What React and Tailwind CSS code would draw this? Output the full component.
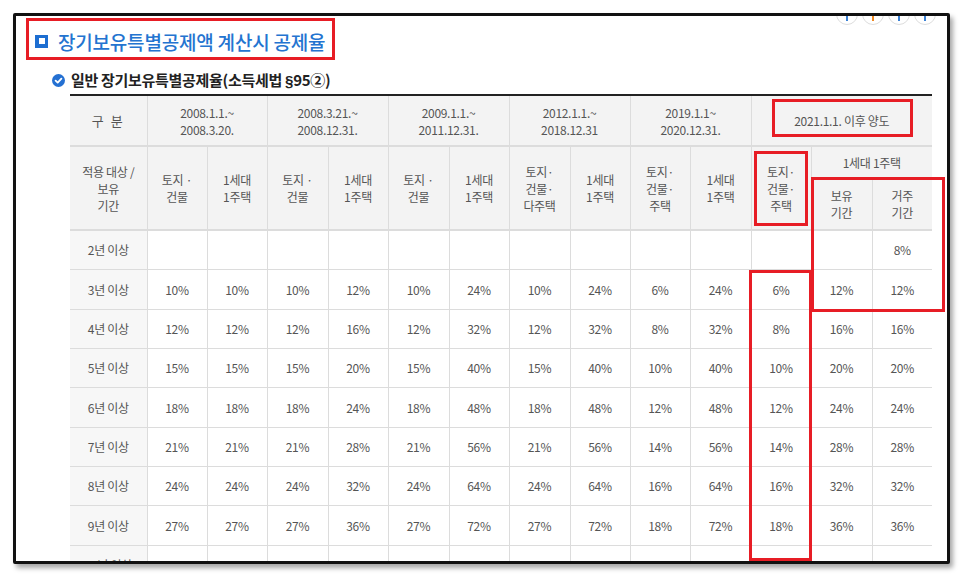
const groups = [
  { date: ['2008.1.1.~', '2008.3.20.'], span: 2 },
  { date: ['2008.3.21.~', '2008.12.31.'], span: 2 },
  { date: ['2009.1.1.~', '2011.12.31.'], span: 2 },
  { date: ['2012.1.1.~', '2018.12.31'], span: 2 },
  { date: ['2019.1.1~', '2020.12.31.'], span: 2 },
]

const subHeads = [
  ['토지 ·', '건물'],
  ['1세대', '1주택'],
  ['토지 ·', '건물'],
  ['1세대', '1주택'],
  ['토지 ·', '건물'],
  ['1세대', '1주택'],
  ['토지·', '건물·', '다주택'],
  ['1세대', '1주택'],
  ['토지·', '건물·', '주택'],
  ['1세대', '1주택'],
]

const colWidths = [77, 60, 60, 61, 60, 61, 60, 61, 60, 60, 61, 60, 61, 60]

const rows = [
  { label: '2년 이상', h: 39, v: ['', '', '', '', '', '', '', '', '', '', '', '', '8%'] },
  { label: '3년 이상', h: 40, v: ['10%', '10%', '10%', '12%', '10%', '24%', '10%', '24%', '6%', '24%', '6%', '12%', '12%'] },
  { label: '4년 이상', h: 39, v: ['12%', '12%', '12%', '16%', '12%', '32%', '12%', '32%', '8%', '32%', '8%', '16%', '16%'] },
  { label: '5년 이상', h: 39, v: ['15%', '15%', '15%', '20%', '15%', '40%', '15%', '40%', '10%', '40%', '10%', '20%', '20%'] },
  { label: '6년 이상', h: 40, v: ['18%', '18%', '18%', '24%', '18%', '48%', '18%', '48%', '12%', '48%', '12%', '24%', '24%'] },
  { label: '7년 이상', h: 39, v: ['21%', '21%', '21%', '28%', '21%', '56%', '21%', '56%', '14%', '56%', '14%', '28%', '28%'] },
  { label: '8년 이상', h: 39, v: ['24%', '24%', '24%', '32%', '24%', '64%', '24%', '64%', '16%', '64%', '16%', '32%', '32%'] },
  { label: '9년 이상', h: 40, v: ['27%', '27%', '27%', '36%', '27%', '72%', '27%', '72%', '18%', '72%', '18%', '36%', '36%'] },
  { label: '10년 이상', h: 39, v: ['30%', '30%', '30%', '40%', '30%', '80%', '30%', '80%', '20%', '80%', '20%', '40%', '40%'] },
]

function Lines({ lines }) {
  return lines.map((l, i) => (
    <span key={i} className="block">
      {l}
    </span>
  ))
}

export default function App() {
  return (
    <div
      className="w-[966px] h-[578px] bg-white overflow-hidden pt-[13px] pl-[13px]"
      style={{ fontFamily: '"Noto Sans CJK KR", "Noto Sans", sans-serif' }}
    >
      <div className="relative w-[937px] h-[551px] border-[3px] border-[#111] rounded-[2px] bg-white shadow-[3px_4px_5px_rgba(0,0,0,0.35)]">
        <div className="absolute inset-0 overflow-hidden">
          {/* font size controls, cut off at top */}
          <div className="absolute -top-[13px] left-[768px] flex items-end gap-[4px]">
            <span className="text-[12px] leading-[14px] text-[#666] mr-[4px] mb-[8px]">글자크기</span>
            {['#3b82d6', '#f08a24', '#3b82d6', '#3b82d6'].map((c, i) => (
              <span
                key={i}
                className="w-[22px] h-[22px] rounded-full border border-[#ddd] flex items-end justify-center pb-[3px]"
              >
                <span className="w-[2px] h-[6px]" style={{ backgroundColor: c }} />
              </span>
            ))}
          </div>

          {/* heading */}
          <div className="ml-[10px] mt-[2px] w-[309px] h-[42px] border-[3px] border-[#e71d25] flex items-center pl-[6px] pt-[4px] gap-[10px]">
            <span className="w-[13px] h-[13px] bg-[#1d6ed1] flex items-center justify-center">
              <span className="w-[6px] h-[6px] bg-white" />
            </span>
            <h1 className="text-[19px] leading-none font-medium text-[#2474d0] tracking-[-0.2px]">
              장기보유특별공제액 계산시 공제율
            </h1>
          </div>

          {/* sub heading */}
          <div className="ml-[36px] mt-[10px] flex items-center gap-[6px]">
            <svg width="13" height="13" viewBox="0 0 13 13">
              <circle cx="6.5" cy="6.5" r="6.5" fill="#2470d2" />
              <path d="M3.6 6.6 L5.7 8.6 L9.4 4.6" stroke="#fff" strokeWidth="1.8" fill="none" strokeLinecap="round" strokeLinejoin="round" />
            </svg>
            <h2 className="text-[15px] leading-[20px] font-bold text-[#222] tracking-[-0.3px]">
              일반 장기보유특별공제율(소득세법{' '}
              <span className="font-['Liberation_Sans',sans-serif]">§</span>95②)
            </h2>
          </div>

          {/* table */}
          <table className="ml-[54px] mt-[3px] table-fixed border-collapse text-[12px] leading-[17px] text-[#555] text-center border-t-2 border-t-[#222] tracking-[-0.3px]">
            <colgroup>
              {colWidths.map((w, i) => (
                <col key={i} style={{ width: w }} />
              ))}
            </colgroup>
            <thead>
              <tr className="h-[51px] bg-[#f3f3f3] border-b-2 border-b-[#dcdcdc]">
                <th className="font-normal text-[13px] tracking-[2px]">구 분</th>
                {groups.map((g, i) => (
                  <th key={i} colSpan={g.span} className="font-normal border-l border-[#dcdcdc]">
                    <Lines lines={g.date} />
                  </th>
                ))}
                <th colSpan={3} className="font-normal border-l border-[#dcdcdc]">
                  2021.1.1. 이후 양도
                </th>
              </tr>
              <tr className="h-[33px] bg-[#f3f3f3]">
                <th rowSpan={2} className="font-normal border-b-2 border-b-[#dcdcdc]">
                  <Lines lines={['적용 대상 /', '보유', '기간']} />
                </th>
                {subHeads.map((s, i) => (
                  <th key={i} rowSpan={2} className="font-normal border-l border-b-2 border-[#dcdcdc] border-b-[#dcdcdc]">
                    <Lines lines={s} />
                  </th>
                ))}
                <th rowSpan={2} className="font-normal border-l border-b-2 border-[#dcdcdc] border-b-[#dcdcdc]">
                  <Lines lines={['토지·', '건물·', '주택']} />
                </th>
                <th colSpan={2} className="font-normal border-l border-b border-[#dcdcdc]">
                  1세대 1주택
                </th>
              </tr>
              <tr className="h-[51px] bg-[#f3f3f3] border-b-2 border-b-[#dcdcdc]">
                <th className="font-normal border-l border-[#dcdcdc]">
                  <Lines lines={['보유', '기간']} />
                </th>
                <th className="font-normal border-l border-[#dcdcdc]">
                  <Lines lines={['거주', '기간']} />
                </th>
              </tr>
            </thead>
            <tbody>
              {rows.map((r) => (
                <tr key={r.label} className="border-b border-[#dcdcdc]" style={{ height: r.h }}>
                  <td className="bg-[#f7f7f7]">{r.label}</td>
                  {r.v.map((v, i) => (
                    <td key={i} className="border-l border-[#dcdcdc]">
                      {v}
                    </td>
                  ))}
                </tr>
              ))}
            </tbody>
          </table>
        </div>

        {/* red highlight marks */}
        <div className="absolute left-[756px] top-[83px] w-[141px] h-[38px] border-[3px] border-[#e71d25]" />
        <div className="absolute left-[738px] top-[135px] w-[54px] h-[75px] border-[3px] border-[#e71d25]" />
        <div className="absolute left-[795px] top-[161px] w-[134px] h-[135px] border-[3px] border-[#e71d25]" />
        <div className="absolute left-[733px] top-[254px] w-[63px] h-[291px] border-[3px] border-[#e71d25]" />
      </div>
    </div>
  )
}
